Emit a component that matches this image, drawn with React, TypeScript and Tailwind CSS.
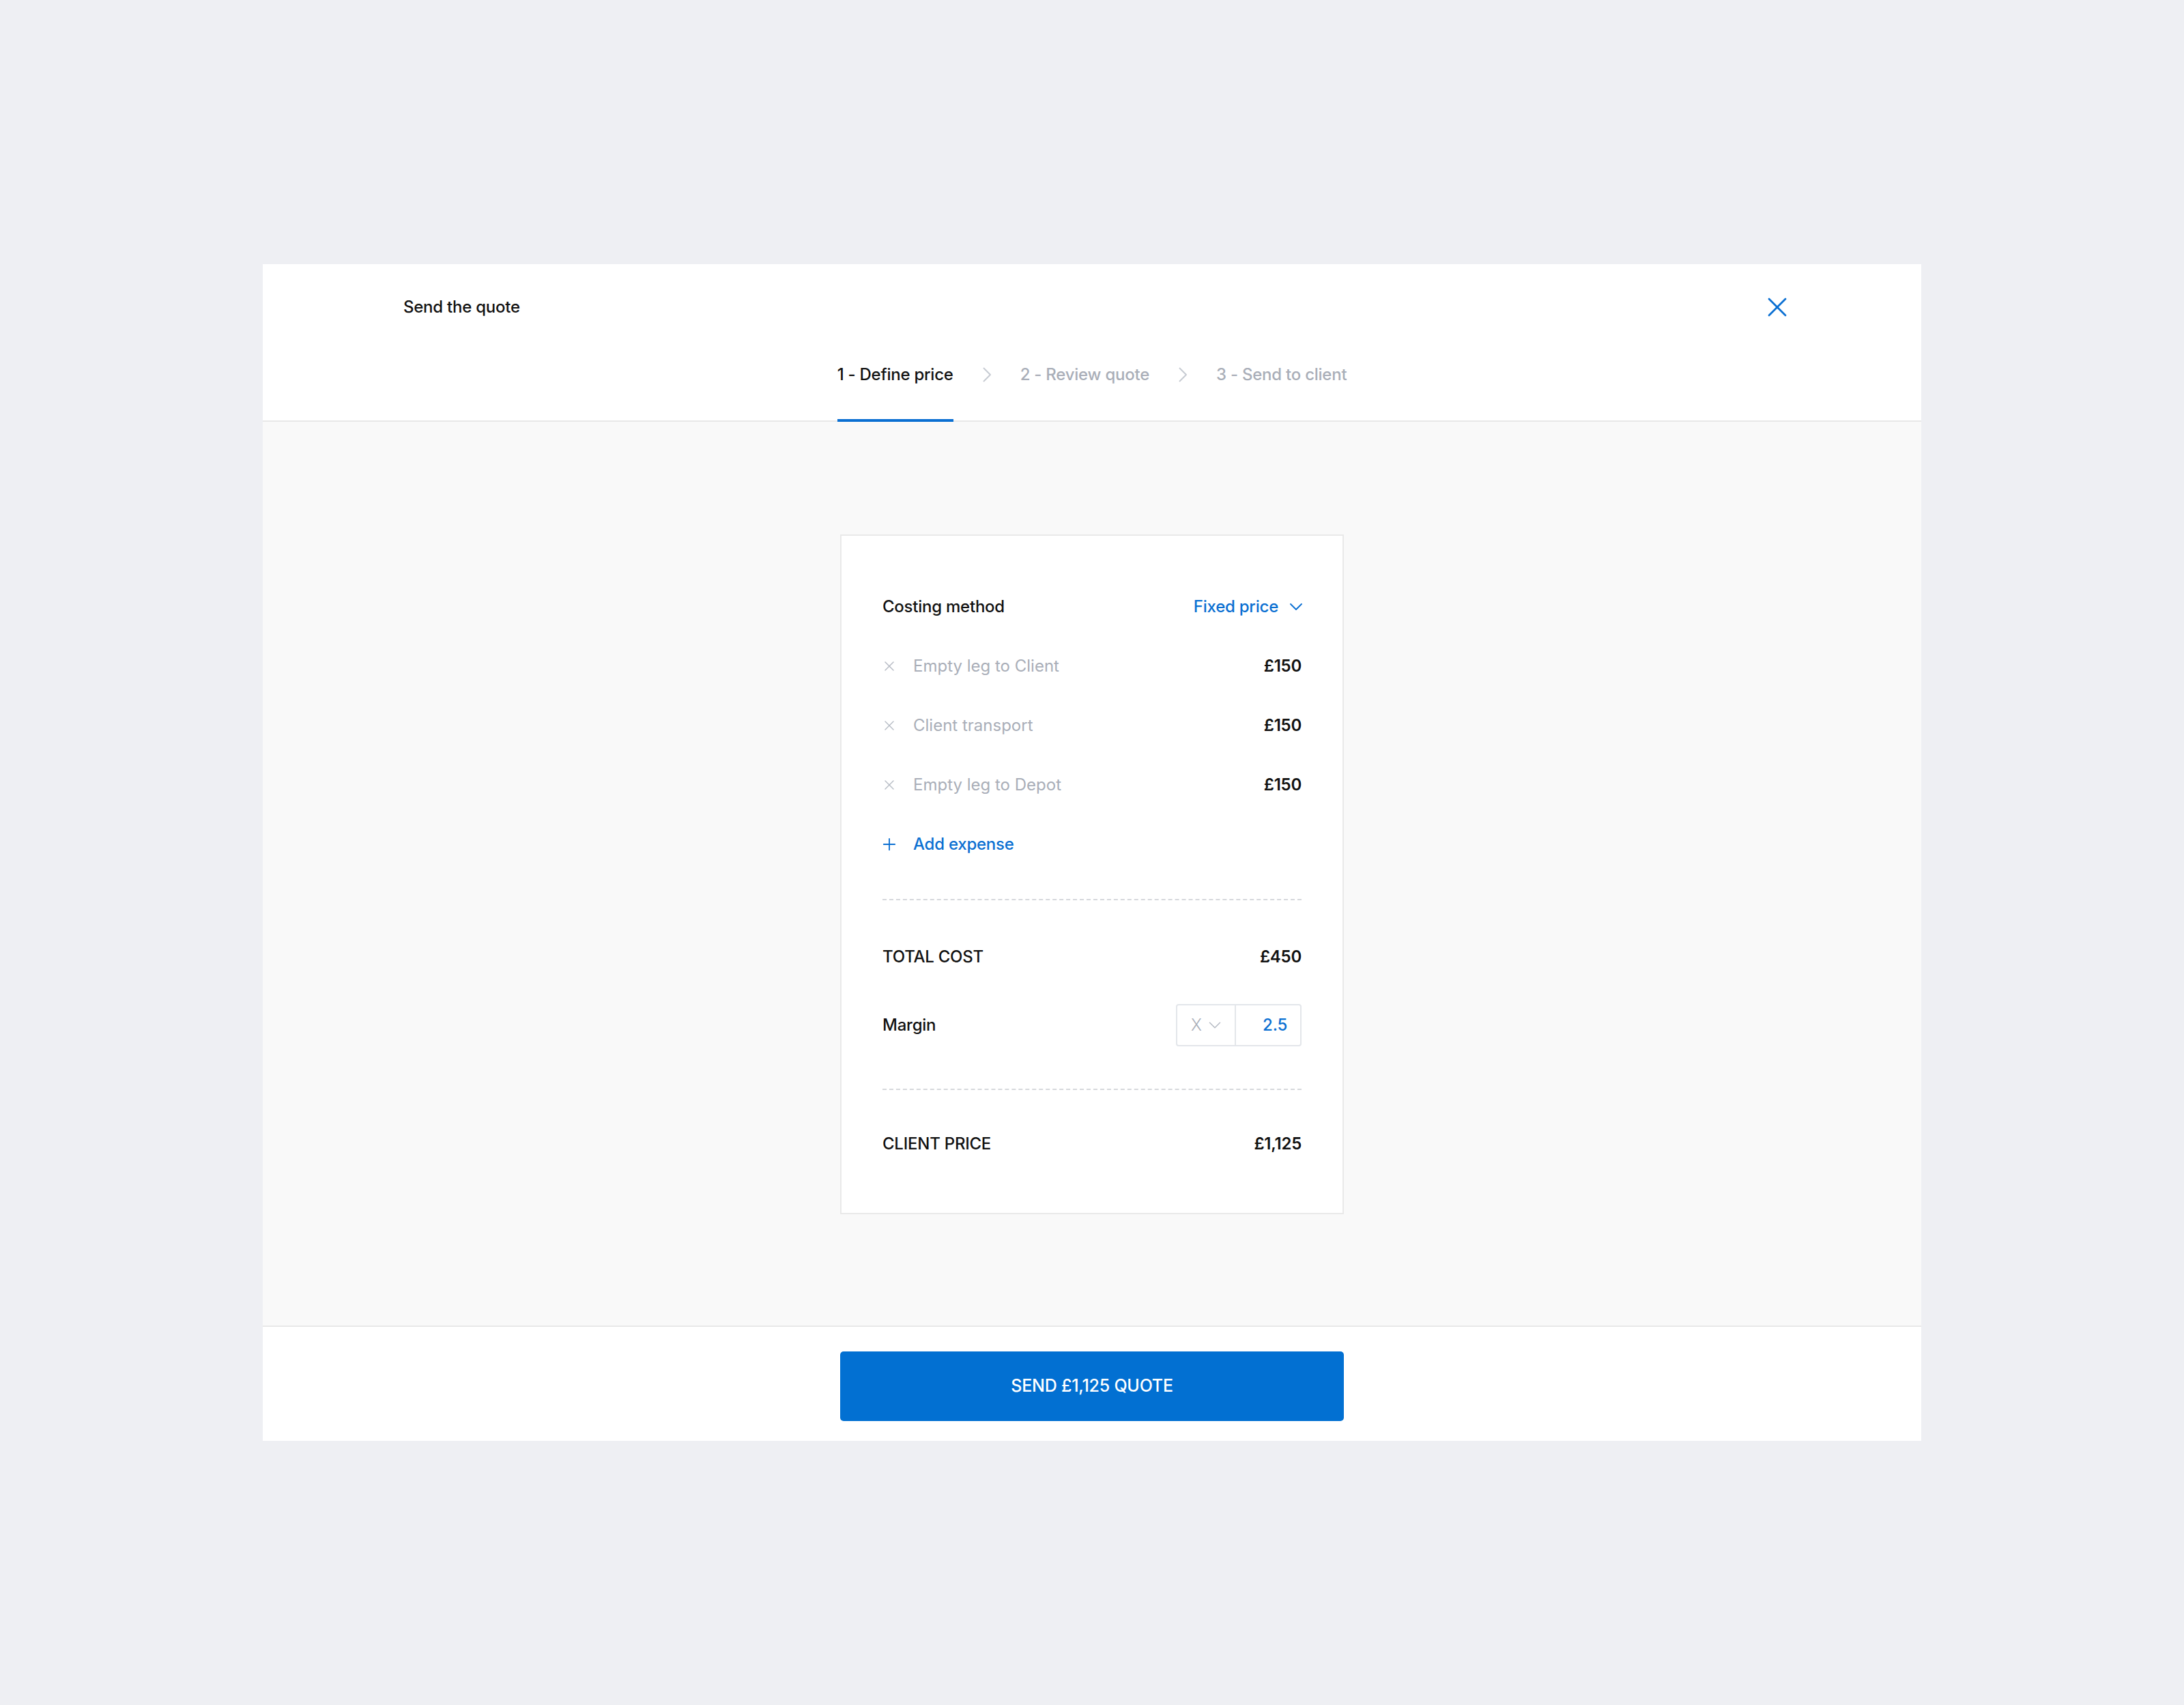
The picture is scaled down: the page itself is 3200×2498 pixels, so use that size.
import { X, Plus, ChevronDown } from "lucide-react";

const items = [
  { label: "Empty leg to Client", amount: "£150" },
  { label: "Client transport", amount: "£150" },
  { label: "Empty leg to Depot", amount: "£150" },
];

const steps = ["1 - Define price", "2 - Review quote", "3 - Send to client"];

const StepChevron = () => (
  <svg width="14" height="24" viewBox="0 0 14 24" fill="none" className="mx-[42px] shrink-0">
    <polyline points="2,2 12,12 2,22" stroke="#c7cbd3" strokeWidth="2" strokeLinejoin="round" />
  </svg>
);

export default function App() {
  return (
    <div className="min-h-screen bg-[#eeeff3] flex items-center justify-center font-['Inter',sans-serif] text-[24px] tracking-[-0.01em] text-[#111]">
      <div className="w-[2430px] bg-white flex flex-col">
        {/* Header */}
        <div className="border-b-2 border-[#e8e8e8]">
          <div className="flex items-center justify-between pl-[206px] pr-[187px] pt-[45px]">
            <h1 className="font-medium leading-[36px]">Send the quote</h1>
            <button aria-label="Close" className="text-[#0a6fd2] -my-[6px]">
              <X size={48} strokeWidth={1.4} />
            </button>
          </div>
          <nav className="flex items-start justify-center mt-[63px] -mb-[2px]">
            {steps.map((step, i) => (
              <div key={step} className="flex items-start">
                {i > 0 && (
                  <div className="h-[36px] flex items-center">
                    <StepChevron />
                  </div>
                )}
                <div
                  className={
                    i === 0
                      ? "font-medium leading-[36px] pb-[47px] border-b-4 border-[#0a6fd2] text-[#111]"
                      : "font-medium leading-[36px] pb-[47px] border-b-4 border-transparent text-[#a9aeb8]"
                  }
                >
                  {step}
                </div>
              </div>
            ))}
          </nav>
        </div>

        {/* Body */}
        <div className="bg-[#f9f9f9] flex justify-center pt-[165px] pb-[163px]">
          <div className="w-[738px] bg-white border-2 border-[#e9e9e9] px-[60px] pt-[60px] pb-[58px]">
            <div className="h-[87px] flex items-center justify-between">
              <span className="font-medium">Costing method</span>
              <button className="flex items-center gap-[10px] text-[#0a6fd2] font-medium -mr-[8px]">
                Fixed price
                <ChevronDown size={32} strokeWidth={1.4} />
              </button>
            </div>

            {items.map((item) => (
              <div key={item.label} className="h-[87px] flex items-center">
                <div className="w-[47px] flex items-center -ml-[2px]">
                  <X size={24} strokeWidth={1.4} className="text-[#b5bac3]" />
                </div>
                <span className="flex-1 text-[#a9aeb8] tracking-normal">{item.label}</span>
                <span className="font-semibold">{item.amount}</span>
              </div>
            ))}

            <div className="h-[87px] flex items-center text-[#0a6fd2]">
              <div className="w-[49px] flex items-center -ml-[4px]">
                <Plus size={28} strokeWidth={1.6} />
              </div>
              <span className="font-medium">Add expense</span>
            </div>

            <div className="mt-[37px] border-t-2 border-dashed border-[#d6d8dc]" />

            <div className="mt-[39px] h-[87px] flex items-center justify-between">
              <span className="font-medium">TOTAL COST</span>
              <span className="font-semibold">£450</span>
            </div>

            <div className="h-[113px] flex items-center justify-between">
              <span className="font-medium">Margin</span>
              <div className="flex h-[62px] w-[184px] border-2 border-[#e3e6ea] rounded-[4px]">
                <div className="w-[86px] flex items-center pl-[20px] gap-[4px] text-[#a9aeb8] border-r-2 border-[#e3e6ea]">
                  <span className="font-light">X</span>
                  <ChevronDown size={30} strokeWidth={1.2} className="text-[#b5bac3]" />
                </div>
                <div className="flex-1 flex items-center justify-end pr-[19px] text-[#0a6fd2] font-medium">
                  2.5
                </div>
              </div>
            </div>

            <div className="mt-[37px] border-t-2 border-dashed border-[#d6d8dc]" />

            <div className="mt-[35px] h-[87px] flex items-center justify-between">
              <span className="font-medium">CLIENT PRICE</span>
              <span className="font-semibold">£1,125</span>
            </div>
          </div>
        </div>

        {/* Footer */}
        <div className="border-t-2 border-[#e8e8e8] flex justify-center pt-[36px] pb-[29px]">
          <button className="w-[738px] h-[102px] rounded-[5px] bg-[#0270d2] text-white font-medium text-[25px]">
            SEND £1,125 QUOTE
          </button>
        </div>
      </div>
    </div>
  );
}
